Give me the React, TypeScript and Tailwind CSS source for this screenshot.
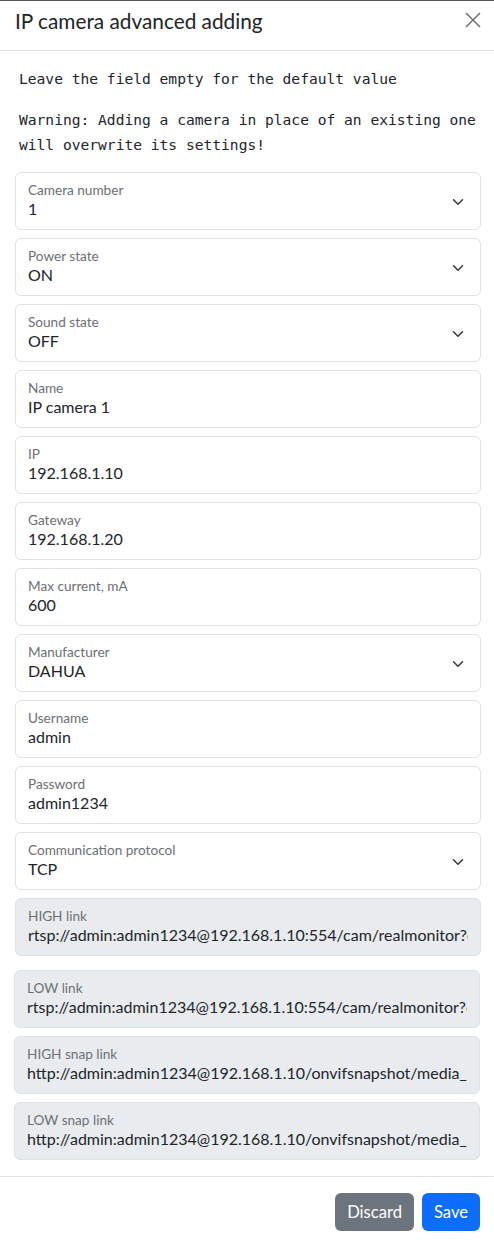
import React from 'react'

type Field = {
  label: string
  value: string
  select?: boolean
  readOnly?: boolean
}

const fields: Field[] = [
  { label: 'Camera number', value: '1', select: true },
  { label: 'Power state', value: 'ON', select: true },
  { label: 'Sound state', value: 'OFF', select: true },
  { label: 'Name', value: 'IP camera 1' },
  { label: 'IP', value: '192.168.1.10' },
  { label: 'Gateway', value: '192.168.1.20' },
  { label: 'Max current, mA', value: '600' },
  { label: 'Manufacturer', value: 'DAHUA', select: true },
  { label: 'Username', value: 'admin' },
  { label: 'Password', value: 'admin1234' },
  { label: 'Communication protocol', value: 'TCP', select: true },
]

const links: Field[] = [
  { label: 'HIGH link', value: 'rtsp://admin:admin1234@192.168.1.10:554/cam/realmonitor?channel=1&subtype=0' },
  { label: 'LOW link', value: 'rtsp://admin:admin1234@192.168.1.10:554/cam/realmonitor?channel=1&subtype=1' },
  { label: 'HIGH snap link', value: 'http://admin:admin1234@192.168.1.10/onvifsnapshot/media_service/snapshot?channel=1&subtype=0' },
  { label: 'LOW snap link', value: 'http://admin:admin1234@192.168.1.10/onvifsnapshot/media_service/snapshot?channel=1&subtype=1' },
]

function Chevron() {
  return (
    <svg width="16" height="12" viewBox="0 0 16 16" className="absolute right-[14px] top-[23px]">
      <path d="m2 5 6 6 6-6" fill="none" stroke="#343a40" strokeWidth="2" strokeLinecap="round" strokeLinejoin="round" />
    </svg>
  )
}

function FloatingField({ field, className = '' }: { field: Field; className?: string }) {
  return (
    <div
      className={`relative h-[58px] rounded-[6px] border border-[#dee2e6] ${
        field.readOnly ? 'bg-[#e9ecef]' : 'bg-white'
      } ${className}`}
    >
      <div className="mx-[12px] pt-[9px] text-[13.6px] leading-[16px] text-[#6c7074] whitespace-nowrap">
        {field.label}
      </div>
      <div className="mx-[12px] mt-[1px] text-[16px] leading-[20px] text-[#212529] whitespace-nowrap overflow-hidden">
        {field.value}
      </div>
      {field.select && <Chevron />}
    </div>
  )
}

export default function App() {
  return (
    <div className="min-h-screen bg-white font-['Lato',sans-serif] border-t border-[#5a5a5a]">
      {/* header */}
      <div className="flex items-center justify-between h-[50px] pl-[15px] pr-[13px] border-b border-[#dee2e6]">
        <h5 className="text-[20.8px] leading-[30px] text-[#212529] -mt-[10px]">IP camera advanced adding</h5>
        <svg width="16" height="16" viewBox="0 0 16 16" className="-mt-[12px]">
          <path d="M1 1 15 15M15 1 1 15" stroke="#707070" strokeWidth="1.5" />
        </svg>
      </div>

      {/* body */}
      <div className="pl-[15px] pr-[13px] pt-[15px] pb-[16px]">
        <div className="font-['DejaVu_Sans_Mono',monospace] text-[14.6px] leading-[25px] text-[#212529] pl-[4px]">
          <p className="mb-[16px]">Leave the field empty for the default value</p>
          <p className="mb-[15px]">Warning: Adding a camera in place of an existing one will overwrite its settings!</p>
        </div>

        <div className="flex flex-col gap-[8px]">
          {fields.map((f) => (
            <FloatingField key={f.label} field={f} />
          ))}
          <FloatingField field={{ ...links[0], readOnly: true }} />
        </div>
        <div className="flex flex-col gap-[8px] mt-[14px] -ml-px mr-[1px]">
          {links.slice(1).map((f) => (
            <FloatingField key={f.label} field={{ ...f, readOnly: true }} />
          ))}
        </div>
      </div>

      {/* footer */}
      <div className="flex justify-end gap-[8px] pl-[15px] pr-[14px] pt-[16px] pb-[16px] border-t border-[#dee2e6]">
        <button className="h-[38px] px-[12px] rounded-[6px] bg-[#6c757d] text-white text-[16.6px]">Discard</button>
        <button className="h-[38px] px-[12px] rounded-[6px] bg-[#0d6efd] text-white text-[16.6px]">Save</button>
      </div>
    </div>
  )
}
